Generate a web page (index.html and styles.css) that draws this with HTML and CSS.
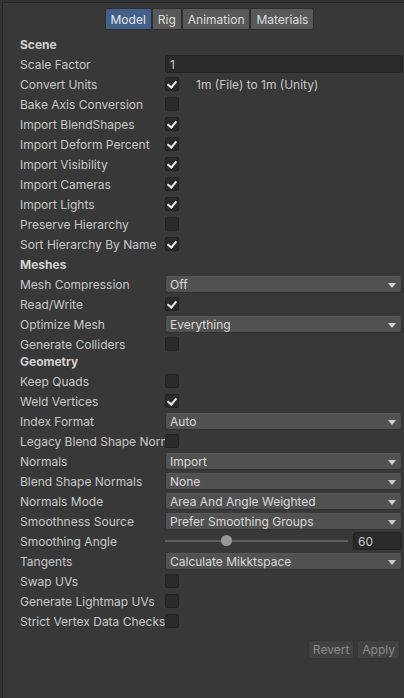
FILE: index.html
```html
<!DOCTYPE html>
<html lang="en">
<head>
<meta charset="utf-8">
<title>Model Import Settings</title>
<link rel="stylesheet" href="styles.css">
</head>
<body>
<div class="inspector">
  <div class="tabs">
    <div class="tab active">Model</div>
    <div class="tab">Rig</div>
    <div class="tab">Animation</div>
    <div class="tab">Materials</div>
  </div>

  <div class="section">Scene</div>
  <div class="row"><span class="label">Scale Factor</span><div class="field text">1</div></div>
  <div class="row"><span class="label">Convert Units</span><span class="check on"></span><span class="note">1m (File) to 1m (Unity)</span></div>
  <div class="row"><span class="label">Bake Axis Conversion</span><span class="check"></span></div>
  <div class="row"><span class="label">Import BlendShapes</span><span class="check on"></span></div>
  <div class="row"><span class="label">Import Deform Percent</span><span class="check on"></span></div>
  <div class="row"><span class="label">Import Visibility</span><span class="check on"></span></div>
  <div class="row"><span class="label">Import Cameras</span><span class="check on"></span></div>
  <div class="row"><span class="label">Import Lights</span><span class="check on"></span></div>
  <div class="row"><span class="label">Preserve Hierarchy</span><span class="check"></span></div>
  <div class="row"><span class="label">Sort Hierarchy By Name</span><span class="check on"></span></div>

  <div class="section">Meshes</div>
  <div class="row"><span class="label">Mesh Compression</span><div class="field drop">Off</div></div>
  <div class="row"><span class="label">Read/Write</span><span class="check on"></span></div>
  <div class="row"><span class="label">Optimize Mesh</span><div class="field drop">Everything</div></div>
  <div class="row"><span class="label">Generate Colliders</span><span class="check"></span></div>

  <div class="section tight">Geometry</div>
  <div class="row"><span class="label">Keep Quads</span><span class="check"></span></div>
  <div class="row"><span class="label">Weld Vertices</span><span class="check on"></span></div>
  <div class="row"><span class="label">Index Format</span><div class="field drop">Auto</div></div>
  <div class="row"><span class="label">Legacy Blend Shape Normals</span><span class="check"></span></div>
  <div class="row"><span class="label">Normals</span><div class="field drop">Import</div></div>
  <div class="row"><span class="label">Blend Shape Normals</span><div class="field drop">None</div></div>
  <div class="row"><span class="label">Normals Mode</span><div class="field drop">Area And Angle Weighted</div></div>
  <div class="row"><span class="label">Smoothness Source</span><div class="field drop">Prefer Smoothing Groups</div></div>
  <div class="row"><span class="label">Smoothing Angle</span>
    <div class="slider"><div class="track"><span class="knob" style="left: 33.3%"></span></div><div class="field num">60</div></div>
  </div>
  <div class="row"><span class="label">Tangents</span><div class="field drop">Calculate Mikktspace</div></div>
  <div class="row"><span class="label">Swap UVs</span><span class="check"></span></div>
  <div class="row"><span class="label">Generate Lightmap UVs</span><span class="check"></span></div>
  <div class="row"><span class="label">Strict Vertex Data Checks</span><span class="check"></span></div>

  <div class="actions">
    <button class="btn" type="button">Revert</button>
    <button class="btn" type="button">Apply</button>
  </div>
</div>
</body>
</html>
```

FILE: styles.css
```css
* { box-sizing: border-box; }

html, body {
  margin: 0;
  height: 100%;
  background: #323232;
}

body {
  padding: 2px 0 0 2px;
  font-family: Inter, "Noto Sans", "Liberation Sans", sans-serif;
  font-size: 12px;
  color: #c8c8c8;
}

.inspector {
  height: 100%;
  background: #383838;
  border-top: 1px solid #262626;
  border-left: 1px solid #262626;
  padding: 5px 1px 0 17px;
}

/* tab strip */
.tabs {
  display: flex;
  justify-content: center;
  margin: 0 0 4px -4px;
}
.tab {
  height: 22px;
  line-height: 21px;
  padding: 0 5px;
  background: #585858;
  color: #dcdcdc;
  border: 1px solid #2e2e2e;
  border-radius: 2px;
  font-size: 12px;
}
.tab.active {
  background: #42608a;
  color: #e6e6e6;
}

/* section headers */
.section {
  height: 20px;
  line-height: 21px;
  font-weight: 700;
  color: #d2d2d2;
}
.section.tight {
  height: 18px;
  line-height: 18px;
  margin-top: -1px;
}

/* property rows */
.row {
  display: flex;
  align-items: center;
  height: 20px;
}
.label {
  flex: 0 0 145px;
  width: 145px;
  white-space: nowrap;
  overflow: hidden;
  color: #c8c8c8;
}

.check {
  position: relative;
  width: 14px;
  height: 14px;
  background: #2a2a2a;
  border: 1px solid #222;
  border-radius: 2px;
  flex: 0 0 14px;
}
.check.on::after {
  content: "";
  position: absolute;
  left: 3px;
  top: 1px;
  width: 4px;
  height: 7px;
  border-right: 2px solid #e8e8e8;
  border-bottom: 2px solid #e8e8e8;
  transform: rotate(40deg);
}

.note {
  margin-left: 17px;
  color: #c8c8c8;
}

.field {
  flex: 1;
  height: 18px;
  line-height: 17px;
  padding-left: 4px;
  border-radius: 3px;
  white-space: nowrap;
}
.field.text {
  background: #2a2a2a;
  border: 1px solid #212121;
}
.field.drop {
  position: relative;
  height: 17px;
  line-height: 16px;
  background: #515151;
  border: 1px solid #303030;
  border-top-color: #585858;
  color: #dadada;
  margin-right: 1px;
}
.field.drop::after {
  content: "";
  position: absolute;
  right: 5px;
  top: 6px;
  border-left: 4px solid transparent;
  border-right: 4px solid transparent;
  border-top: 5px solid #d0d0d0;
}

/* slider with numeric field */
.slider {
  flex: 1;
  display: flex;
  align-items: center;
  gap: 5px;
}
.track {
  position: relative;
  flex: 1;
  height: 2px;
  background: #5e5e5e;
}
.knob {
  position: absolute;
  top: -5px;
  width: 11px;
  height: 11px;
  margin-left: -5px;
  border-radius: 50%;
  background: #999;
}
.field.num {
  flex: 0 0 49px;
  height: 18px;
  background: #2a2a2a;
  border: 1px solid #212121;
  margin-right: 1px;
}

/* footer buttons */
.actions {
  display: flex;
  justify-content: flex-end;
  gap: 3px;
  margin-top: 9px;
  padding-right: 3px;
}
.btn {
  font: inherit;
  font-size: 12px;
  height: 19px;
  line-height: 17px;
  padding: 0 4px;
  background: #424242;
  color: #8a8a8a;
  border: 1px solid #353535;
  border-radius: 3px;
}
```
